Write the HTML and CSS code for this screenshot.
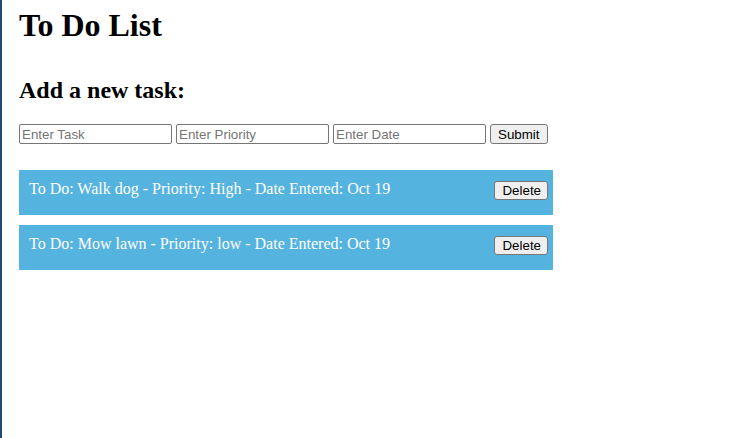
FILE: index.html
```html
<!DOCTYPE html>
<html>
<head>
<meta charset="utf-8">
<link rel="stylesheet" href="styles.css">
</head>
<body>
<div class="page">
  <h1 class="title">To Do List</h1>
  <h2 class="subtitle">Add a new task:</h2>
  <form class="task-form">
    <input class="field" type="text" placeholder="Enter Task">
    <input class="field" type="text" placeholder="Enter Priority">
    <input class="field" type="text" placeholder="Enter Date">
    <button class="btn btn-submit" type="button">Submit</button>
  </form>
  <ul class="task-list">
    <li class="task">
      <span class="task-text">To Do: Walk dog - Priority: High - Date Entered: Oct 19</span>
      <button class="btn" type="button">Delete</button>
    </li>
    <li class="task">
      <span class="task-text">To Do: Mow lawn - Priority: low - Date Entered: Oct 19</span>
      <button class="btn" type="button">Delete</button>
    </li>
  </ul>
</div>
</body>
</html>
```
FILE: styles.css
```css
html, body {
  margin: 0;
  padding: 0;
  background: #fff;
}
body {
  font-family: "Liberation Serif", "Times New Roman", serif;
  color: #000;
}
.page {
  min-height: 438px;
  box-sizing: border-box;
  border-left: 2px solid #1f4b72;
  padding: 7px 0 0 17px;
}
.title {
  font-size: 32px;
  font-weight: bold;
  margin: 0 0 32px 0;
  line-height: 37px;
}
.subtitle {
  font-size: 24px;
  font-weight: bold;
  margin: 0 0 20px 0;
  line-height: 28px;
}
.task-form {
  display: flex;
  gap: 4px;
  margin: 0 0 26px 0;
}
.field {
  width: 153px;
  height: 20px;
  box-sizing: border-box;
  border: 1px solid #767676;
  border-radius: 2px;
  padding: 1px 2px;
  font-family: "Liberation Sans", Arial, sans-serif;
  font-size: 13.33px;
  margin: 0;
}
.field::placeholder {
  color: #757575;
}
.btn {
  font-family: "Liberation Sans", Arial, sans-serif;
  font-size: 13.33px;
  background: #efefef;
  border: 1px solid #767676;
  border-radius: 3px;
  padding: 0 6px;
  height: 20px;
  box-sizing: border-box;
  color: #000;
  margin: 0;
}
.btn-submit {
  padding: 0 8px 0 7px;
}
.task-list {
  list-style: none;
  margin: 0;
  padding: 0;
  width: 534px;
  display: flex;
  flex-direction: column;
  gap: 11px;
}
.task {
  background: #55b3e0;
  height: 45px;
  box-sizing: border-box;
  padding: 10px 5px 0 10px;
  display: flex;
  justify-content: space-between;
  align-items: flex-start;
}
.task + .task {
  margin-top: -1px;
}
.task-text {
  color: #fff;
  font-size: 16px;
  line-height: 18px;
}
.task .btn {
  margin-top: 1px;
  height: 19px;
  padding: 0 6px 0 7px;
}
```
